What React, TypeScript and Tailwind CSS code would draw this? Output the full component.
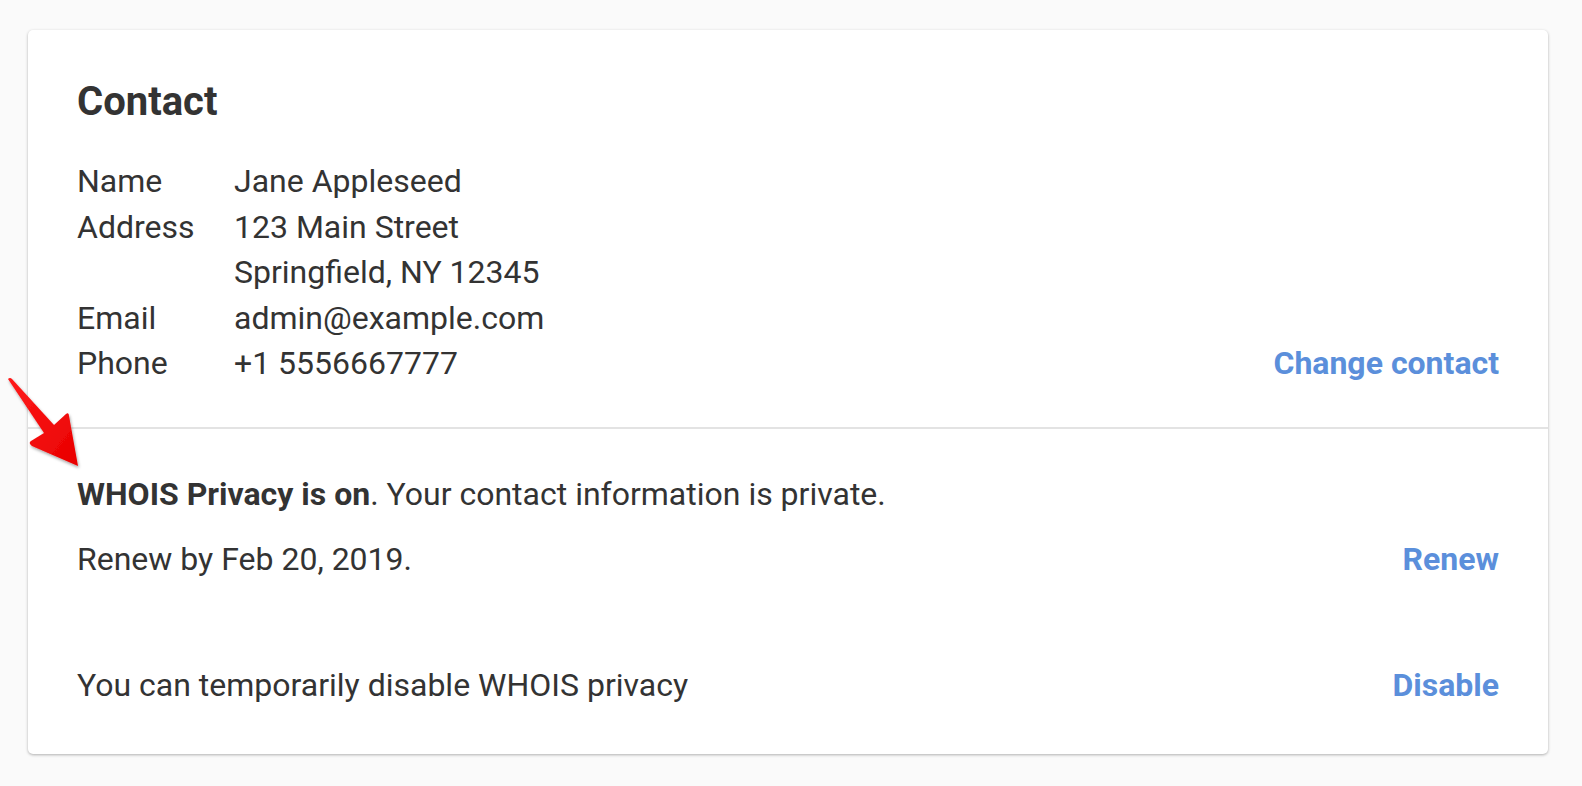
function Arrow() {
  return (
    <svg
      className="pointer-events-none absolute left-0 top-0"
      width="100"
      height="480"
      viewBox="0 0 100 480"
    >
      <defs>
        <linearGradient id="arrowRed" x1="0" y1="0" x2="1" y2="1">
          <stop offset="0" stopColor="#ff1a1a" />
          <stop offset="1" stopColor="#e80000" />
        </linearGradient>
        <filter id="arrowShadow" x="-30%" y="-30%" width="160%" height="160%">
          <feDropShadow dx="1" dy="2" stdDeviation="1.5" floodColor="#000" floodOpacity="0.35" />
        </filter>
      </defs>
      <path
        d="M8,379 Q10,377 12,379 L54,425 L66,414 Q69,412 69,416 L78,466 L32,446 Q28,443 31,441 L44,433 Z"
        fill="url(#arrowRed)"
        filter="url(#arrowShadow)"
      />
    </svg>
  );
}

function Row({ label, children }: { label?: string; children: React.ReactNode }) {
  return (
    <div className="flex">
      <div className="w-[157px] shrink-0">{label}</div>
      <div>{children}</div>
    </div>
  );
}

export default function App() {
  return (
    <div
      className="relative min-h-[786px] bg-[#fafafa] pt-[30px] text-[#333333]"
      style={{ fontFamily: "Roboto, 'Liberation Sans', sans-serif" }}
    >
      <div className="ml-[28px] w-[1520px] rounded-[5px] bg-white shadow-[0_1px_3px_rgba(0,0,0,0.3)]">
        {/* Contact details */}
        <div className="px-[49px] pb-[40px] pt-[44px]">
          <h2 className="text-[40px] font-bold leading-[56px]">Contact</h2>
          <div className="mt-[29px] flex items-end justify-between text-[32px] leading-[45.6px]">
            <div>
              <Row label="Name">Jane Appleseed</Row>
              <Row label="Address">123 Main Street</Row>
              <Row>Springfield, NY 12345</Row>
              <Row label="Email">admin@example.com</Row>
              <Row label="Phone">+1 5556667777</Row>
            </div>
            <a href="#" className="font-bold text-[#5b8fdb]">
              Change contact
            </a>
          </div>
        </div>

        <div className="h-[2px] bg-[#e3e3e3]" />

        {/* Privacy */}
        <div className="px-[49px] pb-[49px] pt-[45px] text-[32px] leading-[40px]">
          <p>
            <span className="font-bold">WHOIS Privacy is on</span>. Your contact information is private.
          </p>
          <div className="mt-[25px] flex items-center justify-between">
            <span>Renew by Feb 20, 2019.</span>
            <a href="#" className="font-bold text-[#5b8fdb]">
              Renew
            </a>
          </div>
          <div className="mt-[86px] flex items-center justify-between">
            <span>You can temporarily disable WHOIS privacy</span>
            <a href="#" className="font-bold text-[#5b8fdb]">
              Disable
            </a>
          </div>
        </div>
      </div>
      <Arrow />
    </div>
  );
}
